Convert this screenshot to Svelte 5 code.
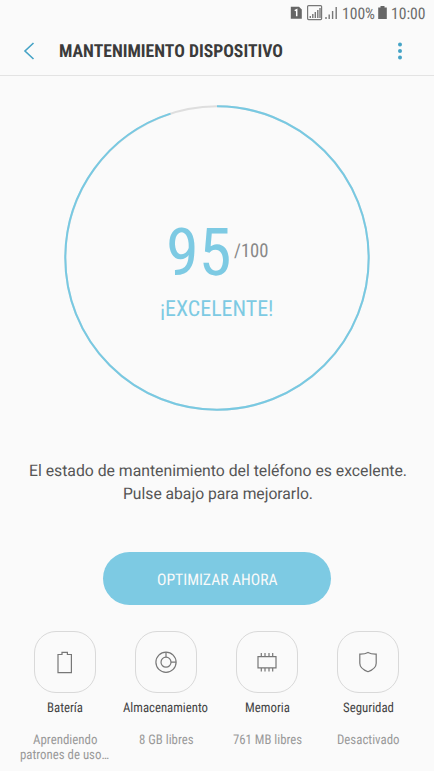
<script>
  const score = 95;
  const radius = 151.7;
  const length = 2 * Math.PI * radius;

  const items = [
    { icon: 'battery', name: 'Batería', width: 36, info: [['Aprendiendo', 64.5], ['patrones de uso…', 89]] },
    { icon: 'storage', name: 'Almacenamiento', width: 85, info: [['8 GB libres', 54.5]] },
    { icon: 'memory', name: 'Memoria', width: 45, info: [['761 MB libres', 69]] },
    { icon: 'security', name: 'Seguridad', width: 51, info: [['Desactivado', 62.5]] }
  ];
</script>

<!-- condensed lettering, fitted to a given width -->
{#snippet fitted(text, width, height, baseline, kind)}
  <svg class={kind} {width} {height}>
    <text y={baseline} textLength={width} lengthAdjust="spacingAndGlyphs">{text}</text>
  </svg>
{/snippet}

<main>
  <div class="status">
    <svg class="signals" width="50" height="26">
      <path class="solid" d="M.8 6.8h8.2l2.8 2.8v9.2h-11z" />
      <path class="one" d="M4.7 10.6l2-1v6.6" />
      <rect class="frame" x="17.6" y="5.6" width="14" height="14" rx="1" />
      <path class="bars" d="M20.3 18v-2M22.8 18v-4M25.3 18v-6M27.8 18v-8M30 18v-10" />
      <path class="bars" d="M36 19v-2M39.2 19v-4.5M42.6 19v-8M46.2 19v-12" />
    </svg>
    {@render fitted('100%', 33, 26, 19, 'clock')}
    <svg class="charge" width="9" height="26">
      <path class="solid" d="M2.5 6h4v1.5h2.3v11.5h-8.6v-11.5h2.3z" />
    </svg>
    {@render fitted('10:00', 34.5, 26, 19, 'clock')}
  </div>

  <header>
    <svg class="back" width="12" height="18" viewBox="0 0 12 18">
      <path d="M10.5 1l-8.5 8 8.5 8" />
    </svg>
    <h1>{@render fitted('MANTENIMIENTO DISPOSITIVO', 224, 24, 18.2, 'title')}</h1>
    <svg class="more" width="6" height="20">
      <circle cx="3" cy="3.5" r="2" />
      <circle cx="3" cy="10" r="2" />
      <circle cx="3" cy="16.4" r="2" />
    </svg>
  </header>

  <section class="gauge">
    <svg class="ring" width="308" height="308" viewBox="0 0 308 308">
      <circle class="track" cx="154" cy="154" r={radius} />
      <circle
        class="value"
        cx="154"
        cy="154"
        r={radius}
        stroke-dasharray="{length * score / 100} {length}"
        transform="rotate(-90 154 154)"
      />
    </svg>
    <div class="reading">
      <div class="score">
        {@render fitted(score, 65.5, 64, 54.7, 'points')}
        {@render fitted('/100', 34.5, 64, 36.6, 'total')}
      </div>
      {@render fitted('¡EXCELENTE!', 113.5, 30, 22, 'grade')}
    </div>
  </section>

  <div class="message">
    {@render fitted('El estado de mantenimiento del teléfono es excelente.', 378, 23, 17, 'copy')}
    {@render fitted('Pulse abajo para mejorarlo.', 190, 23, 17, 'copy')}
  </div>

  <button>{@render fitted('OPTIMIZAR AHORA', 120.5, 24, 18.6, 'action')}</button>

  <ul>
    {#each items as item}
      <li>
        <div class="tile">
          <svg class="icon" width="24" height="24" viewBox="0 0 24 24">
            {#if item.icon === 'battery'}
              <path d="M5 4.5h4v-2.2h5.4v2.2h4v18.2h-13.4z" />
            {:else if item.icon === 'storage'}
              <circle cx="12" cy="12.2" r="10.1" />
              <circle cx="12" cy="12.2" r="5" />
              <path d="M12 2.1v5.1M17 12.2h5.1" />
            {:else if item.icon === 'memory'}
              <path d="M3 6.7h18v11.2h-18zM6.3 3v3.7M10 3v3.7M14 3v3.7M17.7 3v3.7M6.3 17.9v3.7M10 17.9v3.7M14 17.9v3.7M17.7 17.9v3.7" />
            {:else}
              <path d="M12 2.5c2.2 1.2 5 1.7 8.2 1.6v9.2c0 4-3.7 6.8-8.2 8.4c-4.5-1.6-8.2-4.4-8.2-8.4v-9.2c3.2.1 6-.4 8.2-1.6z" />
            {/if}
          </svg>
        </div>
        {@render fitted(item.name, item.width, 18, 13.6, 'name')}
        <div class="info">
          {#each item.info as [line, width]}
            {@render fitted(line, width, 15.5, 12, 'line')}
          {/each}
        </div>
      </li>
    {/each}
  </ul>
</main>

<style>
  :global(body) {
    background: #fafafa;
  }

  main {
    width: 434px;
    height: 771px;
    overflow: hidden;
    background: #fafafa;
    font-family: 'Roboto Condensed', Roboto, sans-serif;
    font-stretch: 75%;
    text-rendering: geometricPrecision;
  }

  svg {
    display: block;
    flex: none;
    overflow: visible;
    fill: none;
  }

  .status {
    display: flex;
    height: 26px;
    padding-left: 290px;
  }

  .signals {
    margin-right: 2.3px;
  }

  .solid {
    fill: #666;
  }

  .one {
    stroke: #fff;
    stroke-width: 1.5;
  }

  .frame {
    stroke: #777;
    stroke-width: 1.2;
  }

  .bars {
    stroke: #777;
    stroke-width: 1.4;
  }

  .clock {
    fill: #6b6b6b;
    font-size: 16px;
  }

  .charge {
    margin: 0 4.5px 0 2.5px;
  }

  header {
    display: flex;
    align-items: center;
    height: 49px;
    padding: 0 31px 0 23px;
    border-bottom: 1px solid #e3e3e3;
  }

  .back {
    stroke: #45a3c6;
    stroke-width: 1.6;
  }

  h1 {
    margin: 0 auto 0 24px;
  }

  .title {
    fill: #3b3b3b;
    font-size: 18px;
    font-weight: 700;
  }

  .more {
    fill: #45a3c6;
  }

  .gauge {
    display: grid;
    justify-content: center;
    padding-top: 28.3px;
  }

  .ring,
  .reading {
    grid-area: 1 / 1;
  }

  .ring {
    stroke-width: 2;
  }

  .track {
    stroke: #dedede;
  }

  .value {
    stroke: #78c9e2;
  }

  .reading {
    display: flex;
    flex-direction: column;
    align-items: center;
    padding-top: 116px;
  }

  .score {
    display: flex;
    gap: 2.5px;
  }

  .points {
    fill: #7dcae3;
    font-size: 66px;
  }

  .total {
    fill: #888;
    font-size: 19px;
  }

  .grade {
    margin-top: 10px;
    fill: #7dcae3;
    font-size: 22px;
  }

  .message {
    display: flex;
    flex-direction: column;
    align-items: center;
    margin: 46.7px 0 0 1px;
    font-family: Roboto, sans-serif;
    font-stretch: 100%;
  }

  .copy {
    fill: #555;
    font-size: 16px;
  }

  button {
    display: flex;
    align-items: center;
    justify-content: center;
    width: 228px;
    height: 53px;
    margin: 47px auto 0;
    padding: 0;
    border: 0;
    border-radius: 26.5px;
    background: #7dcae3;
    font: inherit;
    text-rendering: inherit;
  }

  .action {
    fill: #fafafa;
    font-size: 16px;
  }

  ul {
    display: grid;
    grid-template-columns: repeat(4, 101.1px);
    margin: 26px 0 0 14.3px;
    padding: 0;
    list-style: none;
  }

  li {
    display: flex;
    flex-direction: column;
    align-items: center;
  }

  .tile {
    display: flex;
    align-items: center;
    justify-content: center;
    box-sizing: border-box;
    width: 62px;
    height: 62px;
    border: 1px solid #d9d9d9;
    border-radius: 22px;
  }

  .icon {
    stroke: #777;
    stroke-width: 1.2;
  }

  .name {
    margin-top: 5px;
    fill: #444;
    font-size: 13.3px;
  }

  .info {
    display: flex;
    flex-direction: column;
    align-items: center;
    margin-top: 16px;
  }

  .line {
    fill: #999;
    font-size: 13.3px;
  }
</style>
